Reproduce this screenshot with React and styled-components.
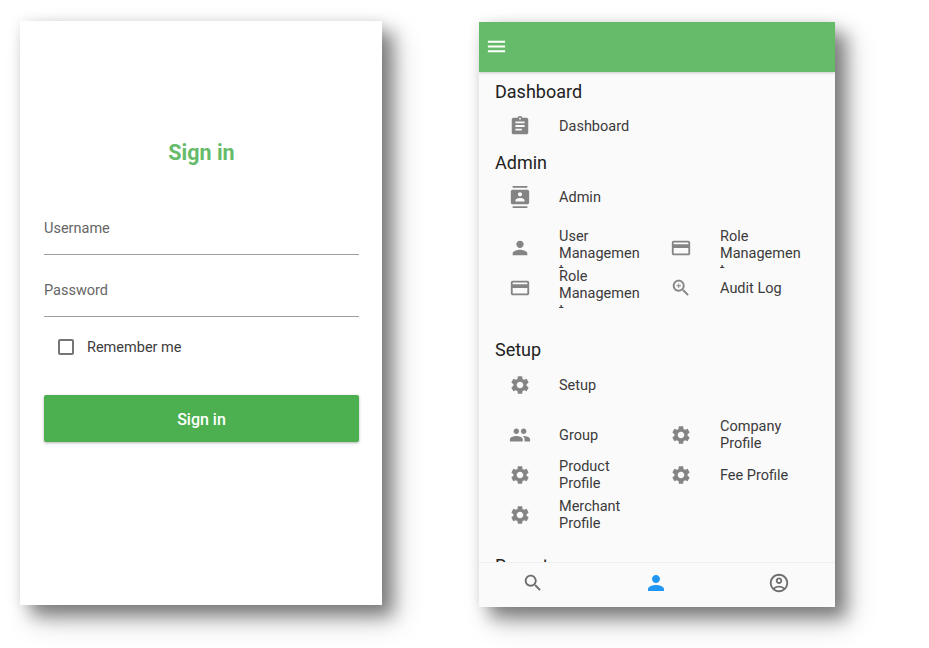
import React from 'react'
import styled, { createGlobalStyle } from 'styled-components'

const GlobalStyle = createGlobalStyle`
  html, body { margin: 0; padding: 0; background: #fff; }
  body { font-family: Roboto, "Liberation Sans", sans-serif; }
`

const paths = {
  menu: 'M3 18h18v-2H3v2zm0-5h18v-2H3v2zm0-7v2h18V6H3z',
  assignment: 'M19 3h-4.18C14.4 1.84 13.3 1 12 1c-1.3 0-2.4.84-2.82 2H5c-1.1 0-2 .9-2 2v14c0 1.1.9 2 2 2h14c1.1 0 2-.9 2-2V5c0-1.1-.9-2-2-2zm-7 0c.55 0 1 .45 1 1s-.45 1-1 1-1-.45-1-1 .45-1 1-1zm2 14H7v-2h7v2zm3-4H7v-2h10v2zm0-4H7V7h10v2z',
  contacts: 'M20 0H4v2h16V0zM4 24h16v-2H4v2zM20 4H4c-1.1 0-2 .9-2 2v12c0 1.1.9 2 2 2h16c1.1 0 2-.9 2-2V6c0-1.1-.9-2-2-2zm-8 2.75c1.24 0 2.25 1.01 2.25 2.25s-1.01 2.25-2.25 2.25S9.75 10.24 9.75 9 10.76 6.75 12 6.75zM17 17H7v-1.5c0-1.67 3.33-2.5 5-2.5s5 .83 5 2.5V17z',
  person: 'M12 12c2.21 0 4-1.79 4-4s-1.79-4-4-4-4 1.79-4 4 1.79 4 4 4zm0 2c-2.67 0-8 1.34-8 4v2h16v-2c0-2.66-5.33-4-8-4z',
  card: 'M20 4H4c-1.11 0-1.99.89-1.99 2L2 18c0 1.11.89 2 2 2h16c1.11 0 2-.89 2-2V6c0-1.11-.89-2-2-2zm0 14H4v-6h16v6zm0-10H4V6h16v2z',
  zoomIn: 'M15.5 14h-.79l-.28-.27C15.41 12.59 16 11.11 16 9.5 16 5.91 13.09 3 9.5 3S3 5.91 3 9.5 5.91 16 9.5 16c1.61 0 3.09-.59 4.23-1.57l.27.28v.79l5 4.99L20.49 19l-4.99-5zm-6 0C7.01 14 5 11.99 5 9.5S7.01 5 9.5 5 14 7.01 14 9.5 11.99 14 9.5 14zm2.5-4h-2v2H9v-2H7V9h2V7h1v2h2v1z',
  settings: 'M19.14 12.94c.04-.3.06-.61.06-.94 0-.32-.02-.64-.07-.94l2.03-1.58c.18-.14.23-.41.12-.61l-1.92-3.32c-.12-.22-.37-.29-.59-.22l-2.39.96c-.5-.38-1.03-.7-1.62-.94l-.36-2.54c-.04-.24-.24-.41-.48-.41h-3.84c-.24 0-.43.17-.47.41l-.36 2.54c-.59.24-1.13.57-1.62.94l-2.39-.96c-.22-.08-.47 0-.59.22L2.74 8.87c-.12.21-.08.47.12.61l2.03 1.58c-.05.3-.09.63-.09.94s.02.64.07.94l-2.03 1.58c-.18.14-.23.41-.12.61l1.92 3.32c.12.22.37.29.59.22l2.39-.96c.5.38 1.03.7 1.62.94l.36 2.54c.05.24.24.41.48.41h3.84c.24 0 .44-.17.47-.41l.36-2.54c.59-.24 1.13-.56 1.62-.94l2.39.96c.22.08.47 0 .59-.22l1.92-3.32c.12-.22.07-.47-.12-.61l-2.01-1.58zM12 15.6c-1.98 0-3.6-1.62-3.6-3.6s1.62-3.6 3.6-3.6 3.6 1.62 3.6 3.6-1.62 3.6-3.6 3.6z',
  group: 'M16 11c1.66 0 2.99-1.34 2.99-3S17.66 5 16 5c-1.66 0-3 1.34-3 3s1.34 3 3 3zm-8 0c1.66 0 2.99-1.34 2.99-3S9.66 5 8 5C6.34 5 5 6.34 5 8s1.34 3 3 3zm0 2c-2.33 0-7 1.17-7 3.5V19h14v-2.5c0-2.33-4.67-3.5-7-3.5zm8 0c-.29 0-.62.02-.97.05 1.16.84 1.97 1.97 1.97 3.45V19h6v-2.5c0-2.33-4.67-3.5-7-3.5z',
  search: 'M15.5 14h-.79l-.28-.27C15.41 12.59 16 11.11 16 9.5 16 5.91 13.09 3 9.5 3S3 5.91 3 9.5 5.91 16 9.5 16c1.61 0 3.09-.59 4.23-1.57l.27.28v.79l5 4.99L20.49 19l-4.99-5zm-6 0C7.01 14 5 11.99 5 9.5S7.01 5 9.5 5 14 7.01 14 9.5 11.99 14 9.5 14z',
  account: 'M12 2C6.48 2 2 6.48 2 12s4.48 10 10 10 10-4.48 10-10S17.52 2 12 2zM7.35 18.5C8.66 17.56 10.26 17 12 17s3.34.56 4.65 1.5C15.34 19.44 13.74 20 12 20s-3.34-.56-4.65-1.5zm10.79-1.38C16.45 15.8 14.32 15 12 15s-4.45.8-6.14 2.12C4.7 15.73 4 13.95 4 12c0-4.42 3.58-8 8-8s8 3.58 8 8c0 1.95-.7 3.73-1.86 5.12zM12 6c-1.93 0-3.5 1.57-3.5 3.5S10.07 13 12 13s3.5-1.57 3.5-3.5S13.93 6 12 6zm0 5c-.83 0-1.5-.67-1.5-1.5S11.17 8 12 8s1.5.67 1.5 1.5S12.83 11 12 11z',
}

const Svg = styled.svg`
  width: ${p => p.size || 22}px;
  height: ${p => p.size || 22}px;
  fill: ${p => p.color || '#848484'};
  flex-shrink: 0;
  display: block;
`
const Icon = ({ name, size, color }) => (
  <Svg viewBox="0 0 24 24" size={size} color={color}>
    <path d={paths[name]} />
  </Svg>
)

const Page = styled.div`
  display: flex;
  align-items: flex-start;
  gap: 97px;
  padding: 21px 0 0 20px;
  width: 929px;
  height: 648px;
  box-sizing: border-box;
  overflow: hidden;
`
const Phone = styled.div`
  width: ${p => p.w}px;
  height: ${p => p.h}px;
  margin-top: ${p => p.top || 0}px;
  flex-shrink: 0;
  display: flex;
  flex-direction: column;
  box-sizing: border-box;
  background: ${p => p.bg};
  box-shadow: 11px 11px 16px rgba(0, 0, 0, 0.4), 14px 15px 28px rgba(0, 0, 0, 0.18), 0 0 12px rgba(0, 0, 0, 0.08);
  overflow: hidden;
`

const LoginBody = styled.div`
  display: flex;
  flex-direction: column;
  padding: 117px 23px 0 24px;
`
const Title = styled.h1`
  margin: 0 0 47px;
  height: 30px;
  line-height: 30px;
  text-align: center;
  font-size: 21.5px;
  font-weight: 700;
  color: #66bb6a;
`
const Field = styled.div`
  height: 40px;
  box-sizing: border-box;
  margin-bottom: 22px;
  border-bottom: 1px solid #9e9e9e;
  font-size: 14.5px;
  line-height: 28px;
  color: #666;
`
const RememberRow = styled.label`
  display: flex;
  align-items: center;
  height: 24px;
  margin: -4px 0 36px 13.5px;
  font-size: 14.5px;
  color: #3c3c3c;
`
const Box = styled.span`
  width: 16px;
  height: 16px;
  box-sizing: border-box;
  border: 2px solid #757575;
  border-radius: 2px;
  margin-right: 13.5px;
`
const SignIn = styled.button`
  height: 47px;
  padding: 1px 0 0;
  border: 0;
  border-radius: 2px;
  background: #4caf50;
  color: #fff;
  font-family: inherit;
  font-size: 16px;
  font-weight: 500;
  box-shadow: 0 1px 3px rgba(0, 0, 0, 0.3);
`

const AppBar = styled.div`
  height: 50px;
  flex-shrink: 0;
  display: flex;
  align-items: center;
  padding: 0 0 2px 6px;
  box-sizing: border-box;
  background: #66bb6a;
  box-shadow: 0 1px 3px rgba(0, 0, 0, 0.2);
  position: relative;
`
const Scroll = styled.div`
  flex: 1;
  min-height: 0;
  overflow: hidden;
  padding: 7px 0 0 16px;
`
const Heading = styled.div`
  height: 26px;
  line-height: 26px;
  margin-top: ${p => p.gap || 0}px;
  margin-bottom: ${p => p.below ?? 2}px;
  font-size: 18px;
  color: #212121;
`
const Grid = styled.div`
  display: grid;
  grid-template-columns: 161px 161px;
  grid-auto-rows: 40px;
  margin-top: ${p => p.gap || 0}px;
`
const Item = styled.div`
  display: flex;
  align-items: center;
  height: 40px;
  padding-left: 4.5px;
`
const IconSlot = styled.div`
  width: 40px;
  margin-right: 19.5px;
  display: flex;
  justify-content: center;
  flex-shrink: 0;
`
const ItemText = styled.div`
  width: 84px;
  max-height: 40px;
  overflow: hidden;
  overflow-wrap: anywhere;
  font-size: 14.5px;
  line-height: 17px;
  color: #3a3a3a;
`
const BottomNav = styled.div`
  height: 45px;
  flex-shrink: 0;
  display: flex;
  align-items: center;
  justify-content: space-between;
  padding: 0 45px 4px 43px;
  background: #fafafa;
  border-top: 1px solid #f0f0f0;
  box-sizing: border-box;
`

const MenuItem = ({ icon, text }) => (
  <Item>
    <IconSlot><Icon name={icon} /></IconSlot>
    <ItemText>{text}</ItemText>
  </Item>
)

export default function App() {
  return (
    <>
      <GlobalStyle />
      <Page>
        <Phone w={362} h={584} bg="#fff">
          <LoginBody>
            <Title>Sign in</Title>
            <Field>Username</Field>
            <Field>Password</Field>
            <RememberRow><Box />Remember me</RememberRow>
            <SignIn>Sign in</SignIn>
          </LoginBody>
        </Phone>
        <Phone w={356} h={585} top={1} bg="#fafafa">
          <AppBar><Icon name="menu" size={23} color="#fff" /></AppBar>
          <Scroll>
            <Heading below={1}>Dashboard</Heading>
            <MenuItem icon="assignment" text="Dashboard" />
            <Heading gap={4} below={1}>Admin</Heading>
            <MenuItem icon="contacts" text="Admin" />
            <Grid gap={11}>
              <MenuItem icon="person" text="User Management" />
              <MenuItem icon="card" text="Role Management" />
              <MenuItem icon="card" text="Role Management" />
              <MenuItem icon="zoomIn" text="Audit Log" />
            </Grid>
            <Heading gap={29}>Setup</Heading>
            <MenuItem icon="settings" text="Setup" />
            <Grid gap={10}>
              <MenuItem icon="group" text="Group" />
              <MenuItem icon="settings" text="Company Profile" />
              <MenuItem icon="settings" text="Product Profile" />
              <MenuItem icon="settings" text="Fee Profile" />
              <MenuItem icon="settings" text="Merchant Profile" />
            </Grid>
            <Heading gap={18}>Report</Heading>
          </Scroll>
          <BottomNav>
            <Icon name="search" color="#6e6e6e" />
            <Icon name="person" size={24} color="#2196f3" />
            <Icon name="account" color="#6e6e6e" />
          </BottomNav>
        </Phone>
      </Page>
    </>
  )
}
